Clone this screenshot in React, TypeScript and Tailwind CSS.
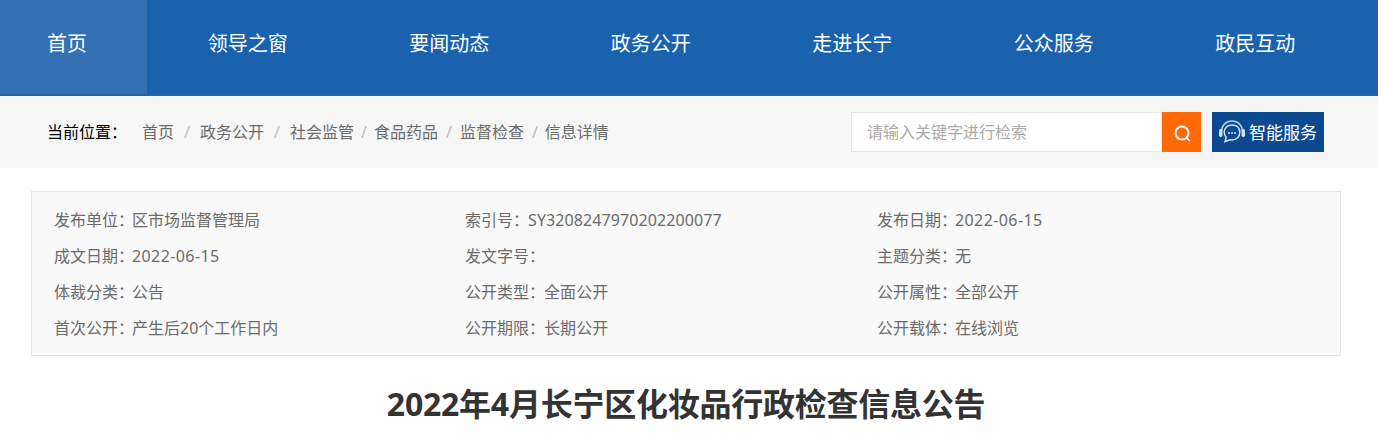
const navItems = ["领导之窗", "要闻动态", "政务公开", "走进长宁", "公众服务", "政民互动"];

const infoRows = [
  ["发布单位：", "区市场监督管理局", "索引号：", "SY3208247970202200077", "发布日期：", "2022-06-15"],
  ["成文日期：", "2022-06-15", "发文字号：", "", "主题分类：", "无"],
  ["体裁分类：", "公告", "公开类型：", "全面公开", "公开属性：", "全部公开"],
  ["首次公开：", "产生后20个工作日内", "公开期限：", "长期公开", "公开载体：", "在线浏览"],
];

function HeadsetIcon() {
  return (
    <svg width="28" height="28" viewBox="0 0 28 28" fill="none" className="shrink-0">
      <path d="M3.500 14C3.500 7.500 8 3 14 3s10.500 4.500 10.500 11" stroke="#b9cde3" strokeWidth="1.600" />
      <rect x="1" y="11" width="3.400" height="8" rx="1.700" fill="#d5e1ee" />
      <rect x="23.600" y="11" width="3.400" height="8" rx="1.700" fill="#d5e1ee" />
      <path d="M14 7c-4.600 0-7.800 3-7.800 7.200 0 2 .8 3.700 2 5l-1.200 4.300 5-1.700c.6.100 1.300.2 2 .2 4.600 0 7.800-3.300 7.800-7.800S18.600 7 14 7z" stroke="#d5e1ee" strokeWidth="1.500" />
      <circle cx="11" cy="15" r="1" fill="#d5e1ee" />
      <circle cx="14" cy="15" r="1" fill="#d5e1ee" />
      <circle cx="17" cy="15" r="1" fill="#d5e1ee" />
    </svg>
  );
}

export default function App() {
  return (
    <main className="h-[440px] overflow-hidden bg-white font-['Noto_Sans','Noto_Sans_CJK_SC',sans-serif]">
      <nav className="flex h-[96px] border-b-2 border-[#2364ab] bg-[#1a62ae] text-[20px] text-white">
        <a className="flex h-[94px] w-[147px] items-center bg-[#3371b4] pb-[6px] pl-[47px]">首页</a>
        {navItems.map((item) => (
          <a key={item} className="flex h-[94px] w-[201.5px] items-center justify-center pb-[6px]">
            {item}
          </a>
        ))}
      </nav>

      <div className="flex h-[72px] items-center bg-[#f6f6f6] pl-[47px] pr-[54px]">
        <span className="w-[95px] text-[16px] text-black">当前位置：</span>
        <div className="flex items-center text-[16px] text-[#6b6b6b]">
          <span>首页</span>
          <span className="mx-[10px] text-[#bbb]">/</span>
          <span>政务公开</span>
          <span className="mx-[10px] text-[#bbb]">/</span>
          <span>社会监管</span>
          <span className="mx-[7px] text-[#bbb]">/</span>
          <span>食品药品</span>
          <span className="mx-[8px] text-[#bbb]">/</span>
          <span>监督检查</span>
          <span className="ml-[8px] mr-[7px] text-[#bbb]">/</span>
          <span>信息详情</span>
        </div>

        <div className="ml-auto flex h-[40px] items-stretch">
          <div className="flex w-[311px] items-center border border-[#e8e8e8] bg-white pl-[15px] text-[16px] text-[#aaa]">
            请输入关键字进行检索
          </div>
          <button type="button" className="flex w-[39px] items-center justify-center bg-[#ff6a06] pl-[2px] pt-[4px]">
            <svg width="20" height="20" viewBox="0 0 20 20" fill="none">
              <circle cx="9" cy="9" r="6.500" stroke="white" strokeWidth="2" />
              <path d="M13.500 14l3.500 3" stroke="white" strokeWidth="1.600" />
            </svg>
          </button>
          <button
            type="button"
            className="ml-[11px] flex w-[112px] items-center gap-[3px] bg-[#0b4a91] pl-[6px] text-[17px] text-white"
          >
            <HeadsetIcon />
            <span className="pt-[1px]">智能服务</span>
          </button>
        </div>
      </div>

      <div className="ml-[31px] w-[1310px]">
        <section className="mt-[23px] h-[165px] border border-[#e5e5e5] bg-[#f9f9f9] pl-[22px] pt-[10px]">
          {infoRows.map((row) => (
            <div key={row[0]} className="grid h-[36px] grid-cols-[411px_412px_1fr] items-center text-[16px] text-[#6b6b6b]">
              <div>{row[0]}<span className={row[1].startsWith("2022") ? "-ml-[2px] tracking-[0.4px]" : "-ml-[2px]"}>{row[1]}</span></div>
              <div>{row[2]}<span className="-ml-[1px] tracking-[0.1px]">{row[3]}</span></div>
              <div>{row[4]}<span className={row[5].startsWith("2022") ? "-ml-[2px] tracking-[0.4px]" : "-ml-[2px]"}>{row[5]}</span></div>
            </div>
          ))}
        </section>

        <h1 className="mt-[24px] text-center text-[32px] leading-[48px] font-bold tracking-[-0.25px] text-[#333]">
          2022年4月长宁区化妆品行政检查信息公告
        </h1>
      </div>
    </main>
  );
}
